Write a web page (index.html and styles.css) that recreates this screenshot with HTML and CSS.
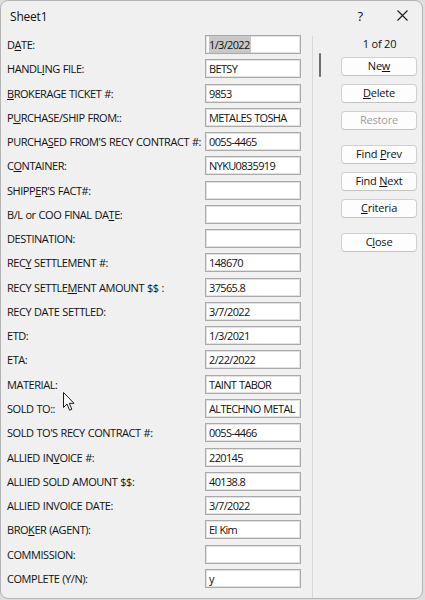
FILE: index.html
```html
<!DOCTYPE html>
<html>
<head>
<meta charset="utf-8">
<link rel="stylesheet" href="styles.css">
</head>
<body>
<div class="dialog">
  <div class="titlebar">
    <span class="title">Sheet1</span>
    <span class="help">?</span>
    <svg class="close-x" width="11" height="11" viewBox="0 0 11 11"><path d="M0.5 0.5 L10.5 10.5 M10.5 0.5 L0.5 10.5" stroke="#1a1a1a" stroke-width="1.1" fill="none"/></svg>
  </div>
  <div class="content">
    <div class="fields">
      <div class="lbl">D<u>A</u>TE:</div><div class="box"><span class="sel">1/3/2022</span></div>
      <div class="lbl">HANDL<u>I</u>NG FILE:</div><div class="box">BETSY</div>
      <div class="lbl"><u>B</u>ROKERAGE TICKET #:</div><div class="box">9853</div>
      <div class="lbl">P<u>U</u>RCHASE/SHIP FROM::</div><div class="box">METALES TOSHA</div>
      <div class="lbl">PURCHA<u>S</u>ED FROM'S RECY CONTRACT #:</div><div class="box">005S-4465</div>
      <div class="lbl">C<u>O</u>NTAINER:</div><div class="box">NYKU0835919</div>
      <div class="lbl">SHIPP<u>E</u>R'S FACT#:</div><div class="box"></div>
      <div class="lbl">B/L or COO FINAL DA<u>T</u>E:</div><div class="box"></div>
      <div class="lbl">DESTINATION:</div><div class="box"></div>
      <div class="lbl">REC<u>Y</u> SETTLEMENT #:</div><div class="box">148670</div>
      <div class="lbl">RECY SETTLE<u>M</u>ENT AMOUNT $$ :</div><div class="box">37565.8</div>
      <div class="lbl">RECY DATE SETTLED:</div><div class="box">3/7/2022</div>
      <div class="lbl">ETD:</div><div class="box">1/3/2021</div>
      <div class="lbl">ETA:</div><div class="box">2/22/2022</div>
      <div class="lbl">MATERIAL:</div><div class="box">TAINT TABOR</div>
      <div class="lbl">SOLD TO::</div><div class="box">ALTECHNO METAL</div>
      <div class="lbl">SOLD TO'S RECY CONTRACT #:</div><div class="box">005S-4466</div>
      <div class="lbl">ALLIED IN<u>V</u>OICE #:</div><div class="box">220145</div>
      <div class="lbl">ALLIED SOLD AMOUNT $$:</div><div class="box">40138.8</div>
      <div class="lbl">ALLIED INVOICE DATE:</div><div class="box">3/7/2022</div>
      <div class="lbl">BRO<u>K</u>ER (AGENT):</div><div class="box">El Kim</div>
      <div class="lbl">COMMISSION:</div><div class="box"></div>
      <div class="lbl">COMPLETE (Y/N):</div><div class="box">y</div>
    </div>
    <div class="side">
      <div class="scroll"><div class="thumb"></div></div>
      <div class="buttons">
        <div class="count">1 of 20</div>
        <div class="btn">Ne<u>w</u></div>
        <div class="btn"><u>D</u>elete</div>
        <div class="btn disabled">Restore</div>
        <div class="btn group">Find <u>P</u>rev</div>
        <div class="btn">Find <u>N</u>ext</div>
        <div class="btn"><u>C</u>riteria</div>
        <div class="btn group">C<u>l</u>ose</div>
      </div>
    </div>
  </div>
  <svg class="cursor" width="13" height="20" viewBox="0 0 13 20"><path d="M0.5 0.5 L0.5 15.5 L4 12 L6.6 18.2 L8.8 17.3 L6.3 11.3 L11 11.3 Z" fill="#ffffff" stroke="#1a1a1a" stroke-width="1" stroke-linejoin="round"/></svg>
</div>
</body>
</html>
```

FILE: styles.css
```css
html, body {
  margin: 0;
  padding: 0;
  background: #dedede;
}
body {
  width: 425px;
  height: 600px;
  overflow: hidden;
  font-family: "Open Sans", "Noto Sans", sans-serif;
  color: #111111;
}
.dialog {
  position: relative;
  box-sizing: border-box;
  width: 423px;
  height: 599px;
  background: #f0f0f0;
  border: 1px solid #b4b4b4;
  border-radius: 8px;
  overflow: hidden;
}
.titlebar {
  height: 29px;
  display: flex;
  align-items: center;
  padding-left: 9px;
  font-size: 12px;
}
.title {
  flex: 1;
  margin-top: 1px;
  letter-spacing: -0.2px;
}
.help {
  font-size: 13px;
  margin-right: 34px;
  margin-top: 1px;
}
.close-x {
  margin-right: 14px;
}
.content {
  display: flex;
}
.fields {
  display: grid;
  grid-template-columns: 198px 96px;
  grid-auto-rows: 19px;
  row-gap: 5.27px;
  padding-left: 6px;
  padding-top: 5px;
  width: 305px;
  box-sizing: border-box;
}
.lbl {
  font-size: 11px;
  line-height: 19px;
  white-space: nowrap;
  letter-spacing: -0.45px;
  word-spacing: 0.5px;
}
.box {
  box-sizing: border-box;
  background: #ffffff;
  border: 1px solid #a9a9a9;
  box-shadow: inset 0 0 0 1px #e2e2e2;
  font-size: 11px;
  line-height: 17px;
  padding-left: 3px;
  white-space: nowrap;
  overflow: hidden;
  letter-spacing: -0.65px;
  word-spacing: 0.6px;
}
.sel {
  background: #c8c8c8;
  padding: 1px 1px 1px 0;
}
u {
  text-decoration-thickness: 1px;
  text-underline-offset: 1px;
}
.side {
  flex: 1;
  display: flex;
  margin-left: 6px;
  border-left: 1px solid #d9d9d9;
  height: 562px;
  margin-top: 6px;
}
.scroll {
  width: 22px;
  padding-top: 17px;
}
.thumb {
  margin-left: 6px;
  width: 2px;
  height: 24px;
  background: #6e6e6e;
  border-radius: 1px;
}
.buttons {
  display: flex;
  flex-direction: column;
  width: 76px;
  margin-left: 6px;
}
.count {
  font-size: 11px;
  text-align: center;
  height: 21px;
  line-height: 15px;
  padding-left: 1px;
  letter-spacing: -0.2px;
}
.btn {
  box-sizing: border-box;
  height: 19px;
  margin-bottom: 8px;
  background: #fdfdfd;
  border: 1px solid #d0d0d0;
  border-bottom-color: #c2c2c2;
  border-radius: 4px;
  font-size: 11px;
  line-height: 16px;
  text-align: center;
  letter-spacing: -0.2px;
}
.btn.disabled {
  color: #9d9d9d;
}
.btn.group {
  margin-top: 7px;
}
.cursor {
  position: absolute;
  left: 62px;
  top: 391px;
}
```
